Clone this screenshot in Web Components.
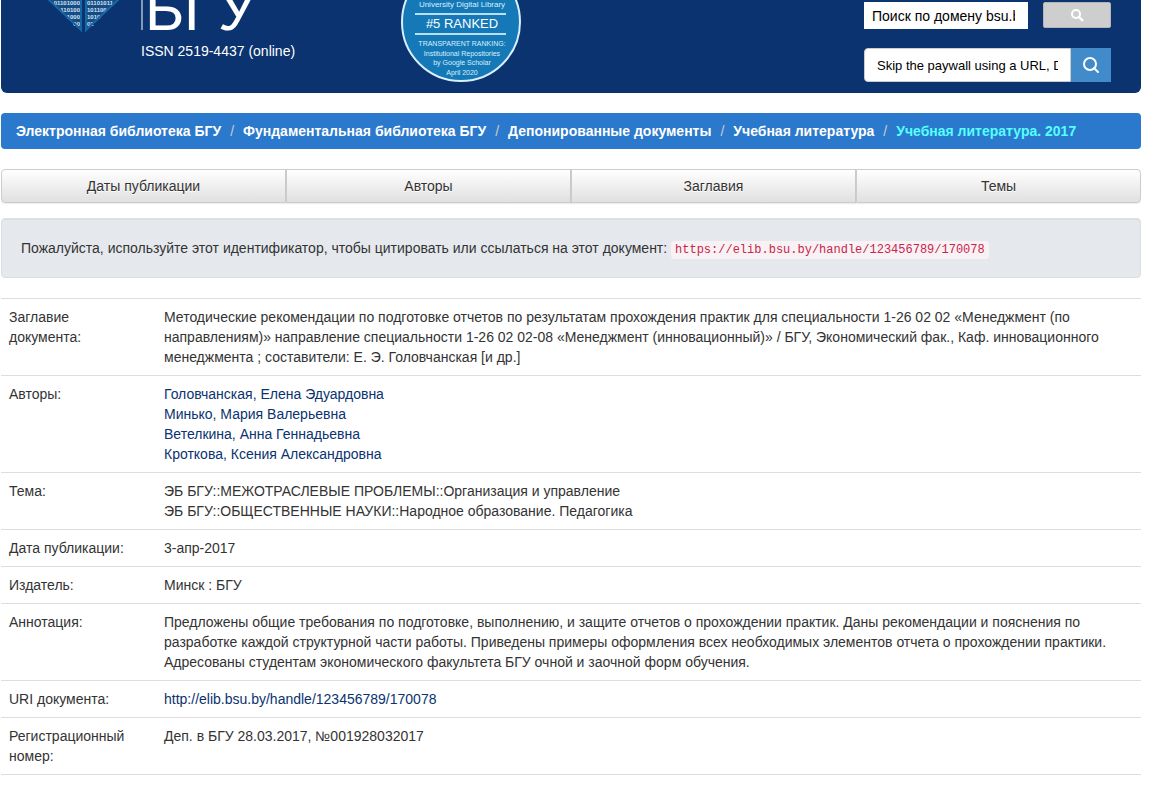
<!DOCTYPE html>
<html lang="ru">
<head>
<meta charset="utf-8">
<title>Электронная библиотека БГУ</title>
<style>
  body {
    margin: 0 14px 0 1px;
    font: 14px/20px "Liberation Sans", Arial, sans-serif;
    color: #333;
    background: #fff;
  }
</style>
</head>
<body>
<elib-header issn="ISSN 2519-4437 (online)">
  <ranking-badge></ranking-badge>
</elib-header>

<elib-breadcrumb>
  <a href="#">Электронная библиотека БГУ</a>
  <a href="#">Фундаментальная библиотека БГУ</a>
  <a href="#">Депонированные документы</a>
  <a href="#">Учебная литература</a>
  <a href="#" class="active">Учебная литература. 2017</a>
</elib-breadcrumb>

<elib-browse></elib-browse>

<elib-cite url="https://elib.bsu.by/handle/123456789/170078">Пожалуйста, используйте этот идентификатор, чтобы цитировать или ссылаться на этот документ:</elib-cite>

<elib-metadata></elib-metadata>

<script>
class ElibHeader extends HTMLElement {
  constructor() {
    super();
    this.attachShadow({ mode: 'open' });
  }

  // binary digits on both halves of the diamond
  getDigits() {
    const rows = [['01101000', '01101011'], ['110100', '101100'], ['1000', '1010'], ['00', '01']];
    return rows.map(([left, right], i) => `
      <text x="80" y="${5 + i * 7}" text-anchor="end">${left}</text>
      <text x="87" y="${5 + i * 7}">${right}</text>
    `).join('');
  }

  connectedCallback() {
    this.shadowRoot.innerHTML = /*html*/ `
      <a class="brand" href="#" aria-label="БГУ">
        <svg width="260" height="32" viewBox="0 0 260 32">
          <path d="M48 -1L82 31V-1Z" fill="#164b84"/>
          <path d="M119 -1L86 31V-1Z" fill="#164b84"/>
          <g fill="#d3e4f2" font-size="6" font-weight="bold" font-family="Liberation Sans">${this.getDigits()}</g>
          <path d="M48 -1L81 30V-1M119 -1L86 30V-1" fill="none" stroke="#1767a6" stroke-width="2"/>
          <path d="M142 0V30" stroke="#fff" stroke-width="1"/>
          <g fill="#fff" font-size="60" font-family="Liberation Sans">
            <text x="145" y="30">Б</text>
            <text x="184" y="30">Г</text>
            <text x="218" y="30">У</text>
          </g>
        </svg>
        <span>${this.getAttribute('issn')}</span>
      </a>
      <slot></slot>
      <div class="search">
        <form class="domain">
          <input type="text" aria-label="Поиск по домену" value="Поиск по домену bsu.by">
          <button type="button" aria-label="Искать">
            <svg width="13" height="13" viewBox="0 0 13 13"><circle cx="5" cy="5" r="4" fill="none" stroke="#fff" stroke-width="2"/><path d="M8 8L12 12" stroke="#fff" stroke-width="2.4"/></svg>
          </button>
        </form>
        <form class="paywall">
          <input type="text" aria-label="Skip the paywall" value="Skip the paywall using a URL, DOI">
          <button type="button" aria-label="Search">
            <svg width="18" height="18" viewBox="0 0 18 18"><circle cx="8" cy="8" r="6" fill="none" stroke="#fff" stroke-width="2"/><path d="M12 12L16 16" stroke="#fff" stroke-width="2" stroke-linecap="round"/></svg>
          </button>
        </form>
      </div>
      ${this.getStyle()}
    `;
  }

  getStyle() {
    return /*html*/ `
    <style>
      :host {
        display: flex;
        background: #0a336f;
        border-radius: 0 0 6px 6px;
      }
      .brand {
        width: 400px;
        color: #fff;
        text-decoration: none;
      }
      .brand svg {
        display: block;
        margin-left: -1px;
      }
      .brand span {
        display: block;
        padding: 9px 0 0 140px;
      }
      .search {
        margin-left: auto;
        padding: 2px 30px 11px 0;
        width: 247px;
      }
      form {
        display: flex;
        margin: 0;
      }
      input, button {
        box-sizing: border-box;
        border: 0;
        margin: 0;
        font: inherit;
        border-radius: 0;
      }
      input {
        color: #000;
        background: #fff;
        min-width: 0;
      }
      button {
        display: flex;
        align-items: center;
        justify-content: center;
        padding: 0;
      }
      .domain {
        justify-content: space-between;
        margin-bottom: 19px;
      }
      .domain input {
        width: 164px;
        height: 27px;
        padding: 0 13px 0 8px;
      }
      .domain button {
        width: 68px;
        height: 26px;
        background: #cecece;
        border: 1px solid #b5b5b5;
        border-radius: 2px;
      }
      .paywall input {
        flex: 1;
        height: 34px;
        padding: 0 12px;
        border: 1px solid #ccc;
        border-radius: 4px 0 0 4px;
        font-size: 13px;
      }
      .paywall button {
        width: 40px;
        height: 34px;
        background: #428bca;
      }
    </style>
    `;
  }
}
customElements.define('elib-header', ElibHeader);

class RankingBadge extends HTMLElement {
  constructor() {
    super();
    this.attachShadow({ mode: 'open' });
  }

  connectedCallback() {
    this.shadowRoot.innerHTML = /*html*/ `
      <svg width="122" height="84" viewBox="0 0 122 84">
        <circle cx="60" cy="22" r="59" fill="#1579b8" stroke="#d9effb" stroke-width="2"/>
        <path d="M14 14H105M14 34H105" stroke="#b9e0f4" stroke-width="2"/>
        <g fill="#d9effb" text-anchor="middle" font-family="Liberation Sans">
          <text x="61" y="7" font-size="8">University Digital Library</text>
          <text x="61" y="28" font-size="13" fill="#fff">#5 RANKED</text>
          <text x="61" y="46" font-size="7">TRANSPARENT RANKING:</text>
          <text x="61" y="56" font-size="7">Institutional Repositories</text>
          <text x="61" y="65" font-size="7">by Google Scholar</text>
          <text x="61" y="75" font-size="7">April 2020</text>
        </g>
      </svg>
      <style>
        :host { display: block; }
        svg { display: block; }
      </style>
    `;
  }
}
customElements.define('ranking-badge', RankingBadge);

class ElibBreadcrumb extends HTMLElement {
  constructor() {
    super();
    this.attachShadow({ mode: 'open' });
  }

  connectedCallback() {
    this.shadowRoot.innerHTML = /*html*/ `
      <slot></slot>
      <style>
        :host {
          display: flex;
          flex-wrap: wrap;
          margin: 20px 0;
          padding: 8px 15px;
          background: #2a79cc;
          border-radius: 4px;
        }
        ::slotted(a) {
          color: #fff;
          font-weight: bold;
          text-decoration: none;
        }
        ::slotted(a.active) { color: #5ff; }
        ::slotted(a:not(:first-child))::before {
          content: "/";
          padding: 0 9px;
          color: #ccc;
          font-weight: normal;
        }
      </style>
    `;
  }
}
customElements.define('elib-breadcrumb', ElibBreadcrumb);

class ElibBrowse extends HTMLElement {
  constructor() {
    super();
    this.attachShadow({ mode: 'open' });
  }

  connectedCallback() {
    const items = ['Даты публикации', 'Авторы', 'Заглавия', 'Темы'];
    this.shadowRoot.innerHTML = /*html*/ `
      ${items.map(item => `<button type="button">${item}</button>`).join('')}
      <style>
        :host {
          display: grid;
          grid-template-columns: repeat(4, 1fr);
          margin-bottom: 15px;
        }
        button {
          height: 34px;
          margin: 0;
          padding: 0 12px;
          border: 1px solid #ccc;
          background: linear-gradient(#fff, #e0e0e0);
          box-shadow: 0 1px 1px rgba(0, 0, 0, 0.08);
          color: #333;
          font: inherit;
          text-shadow: 0 1px 0 #fff;
          cursor: pointer;
        }
        button:first-child { border-radius: 4px 0 0 4px; }
        button:nth-child(4) { border-radius: 0 4px 4px 0; }
      </style>
    `;
  }
}
customElements.define('elib-browse', ElibBrowse);

class ElibCite extends HTMLElement {
  constructor() {
    super();
    this.attachShadow({ mode: 'open' });
  }

  connectedCallback() {
    this.shadowRoot.innerHTML = /*html*/ `
      <slot></slot>
      <code>${this.getAttribute('url')}</code>
      <style>
        :host {
          display: block;
          padding: 19px;
          margin-bottom: 20px;
          background: #e5e9ee;
          border: 1px solid #dcdee1;
          border-radius: 4px;
          box-shadow: inset 0 1px 1px rgba(0, 0, 0, 0.05);
        }
        code {
          padding: 2px 4px;
          color: #c7254e;
          background: #f9f2f4;
          border-radius: 4px;
          font-family: "Liberation Mono", monospace;
          font-size: 12px;
          line-height: 14px;
        }
      </style>
    `;
  }
}
customElements.define('elib-cite', ElibCite);

class ElibMetadata extends HTMLElement {
  constructor() {
    super();
    this.attachShadow({ mode: 'open' });
  }

  getRows() {
    const link = text => `<a href="#">${text}</a>`;
    return [
      ['Заглавие документа:', 'Методические рекомендации по подготовке отчетов по результатам прохождения практик для специальности 1-26 02 02 «Менеджмент (по направлениям)» направление специальности 1-26 02 02-08 «Менеджмент (инновационный)» / БГУ, Экономический фак., Каф. инновационного менеджмента ; составители: Е. Э. Головчанская [и др.]'],
      ['Авторы:', ['Головчанская, Елена Эдуардовна', 'Минько, Мария Валерьевна', 'Ветелкина, Анна Геннадьевна', 'Кроткова, Ксения Александровна'].map(link).join('<br>')],
      ['Тема:', 'ЭБ БГУ::МЕЖОТРАСЛЕВЫЕ ПРОБЛЕМЫ::Организация и управление<br>ЭБ БГУ::ОБЩЕСТВЕННЫЕ НАУКИ::Народное образование. Педагогика'],
      ['Дата публикации:', '3-апр-2017'],
      ['Издатель:', 'Минск : БГУ'],
      ['Аннотация:', 'Предложены общие требования по подготовке, выполнению, и защите отчетов о прохождении практик. Даны рекомендации и пояснения по разработке каждой структурной части работы. Приведены примеры оформления всех необходимых элементов отчета о прохождении практики. Адресованы студентам экономического факультета БГУ очной и заочной форм обучения.'],
      ['URI документа:', link('http://elib.bsu.by/handle/123456789/170078')],
      ['Регистрационный номер:', 'Деп. в БГУ 28.03.2017, №001928032017'],
    ];
  }

  connectedCallback() {
    this.shadowRoot.innerHTML = /*html*/ `
      <table>
        ${this.getRows().map(([label, value]) => `<tr><th scope="row">${label}</th><td>${value}</td></tr>`).join('')}
      </table>
      <style>
        :host { display: block; }
        table {
          width: 100%;
          border-collapse: collapse;
          border-bottom: 1px solid #ddd;
        }
        th, td {
          padding: 8px;
          border-top: 1px solid #ddd;
          text-align: left;
          vertical-align: top;
          font-weight: normal;
        }
        th {
          width: 123px;
          padding-right: 24px;
        }
        a {
          color: #0a336f;
          text-decoration: none;
        }
      </style>
    `;
  }
}
customElements.define('elib-metadata', ElibMetadata);
</script>
</body>
</html>
